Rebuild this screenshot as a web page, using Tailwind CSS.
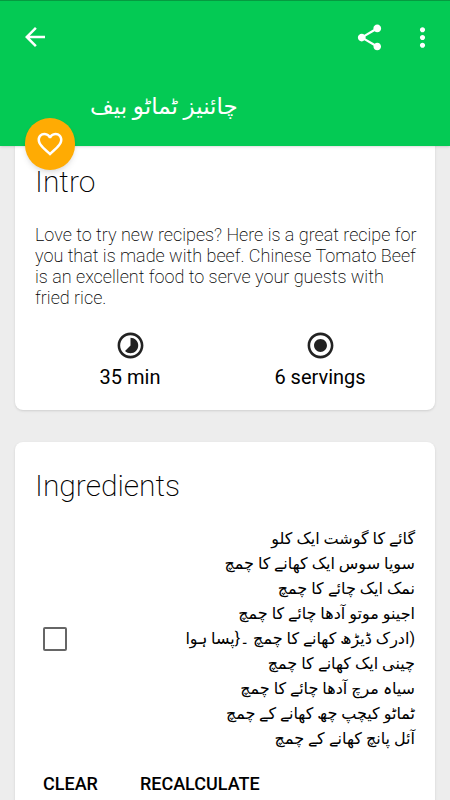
<!DOCTYPE html>
<html lang="en">
<head>
    <meta charset="UTF-8">
    <meta name="viewport" content="width=device-width, initial-scale=1.0">
    <title>Recipe</title>

    <!-- tailwind cdn -->
    <script src="https://cdn.jsdelivr.net/npm/@tailwindcss/browser@4"></script>
</head>
<body class="bg-[#ededed] text-black font-['Roboto','DejaVu_Sans',sans-serif] overflow-x-hidden">

    <!-- app bar -->
    <header class="relative z-10 bg-[#04ca54] border-t border-[#069a40] text-white shadow-sm">
        <div class="h-18 flex items-center justify-between pl-5 pr-3">
            <button type="button" aria-label="Back" class="cursor-pointer">
                <svg class="size-[30px]" viewBox="0 0 24 24" fill="currentColor"><path d="M20 11H7.83l5.59-5.59L12 4l-8 8 8 8 1.41-1.41L7.83 13H20v-2z"/></svg>
            </button>
            <div class="flex items-center gap-[22px]">
                <button type="button" aria-label="Share" class="cursor-pointer">
                    <svg class="size-[31px]" viewBox="0 0 24 24" fill="currentColor"><path d="M18 16.08c-.76 0-1.44.3-1.96.77L8.91 12.7c.05-.23.09-.46.09-.7s-.04-.47-.09-.7l7.05-4.11c.54.5 1.25.81 2.04.81 1.66 0 3-1.34 3-3s-1.34-3-3-3-3 1.34-3 3c0 .24.04.47.09.7L8.04 9.81C7.5 9.31 6.79 9 6 9c-1.66 0-3 1.34-3 3s1.34 3 3 3c.79 0 1.5-.31 2.04-.81l7.12 4.16c-.05.21-.08.43-.08.65 0 1.61 1.31 2.92 2.92 2.92s2.92-1.31 2.92-2.92-1.31-2.92-2.92-2.92z"/></svg>
                </button>
                <button type="button" aria-label="More options" class="cursor-pointer">
                    <svg class="size-[31px]" viewBox="0 0 24 24" fill="currentColor"><path d="M12 8c1.1 0 2-.9 2-2s-.9-2-2-2-2 .9-2 2 .9 2 2 2zm0 2c-1.1 0-2 .9-2 2s.9 2 2 2 2-.9 2-2-.9-2-2-2zm0 6c-1.1 0-2 .9-2 2s.9 2 2 2 2-.9 2-2-.9-2-2-2z"/></svg>
                </button>
            </div>
        </div>
        <h1 class="pl-[90px] pt-[18px] pb-[23px] text-[23px] leading-8 text-left"><span lang="ur" dir="rtl">چائنیز ٹماٹو بیف</span></h1>
        <button type="button" aria-label="Add to favorites" class="absolute left-[25px] -bottom-6 w-[50px] h-[52px] rounded-full bg-[#ffab03] shadow-md flex items-center justify-center cursor-pointer">
            <svg class="size-[30px]" viewBox="0 0 24 24" fill="currentColor"><path d="M16.5 3c-1.74 0-3.41.81-4.5 2.09C10.91 3.81 9.24 3 7.5 3 4.42 3 2 5.42 2 8.5c0 3.78 3.4 6.86 8.55 11.54L12 21.35l1.45-1.32C18.6 15.36 22 12.28 22 8.5 22 5.42 19.58 3 16.5 3zm-4.4 15.55l-.1.1-.1-.1C7.14 14.24 4 11.39 4 8.5 4 6.5 5.5 5 7.5 5c1.54 0 3.04.99 3.57 2.36h1.87C13.46 5.99 14.96 5 16.5 5c2 0 3.5 1.5 3.5 3.5 0 2.89-3.14 5.74-7.9 10.05z"/></svg>
        </button>
    </header>

    <main class="px-[15px] pb-8 -mt-2 flex flex-col gap-8">
        <section class="bg-white rounded-lg shadow pl-5 pr-4 pt-6 pb-[19px]">
            <h2 class="text-3xl leading-10 font-extralight">Intro</h2>
            <p class="mt-[22px] text-lg leading-[21px] font-extralight">Love to try new recipes? Here is a great recipe for you that is made with beef. Chinese Tomato Beef is an excellent food to serve your guests with fried rice.</p>
            <div class="mt-[22px] pr-1 grid grid-cols-2 text-center text-xl leading-7">
                <div class="flex flex-col items-center gap-[2px]">
                    <svg class="size-[31px]" viewBox="0 0 24 24" fill="#222"><path d="M16.24 7.76C15.07 6.59 13.54 6 12 6v6l-4.24 4.24c2.34 2.34 6.14 2.34 8.49 0 2.34-2.34 2.34-6.14-.01-8.48zM12 2C6.48 2 2 6.48 2 12s4.48 10 10 10 10-4.48 10-10S17.52 2 12 2zm0 18c-4.42 0-8-3.58-8-8s3.58-8 8-8 8 3.58 8 8-3.58 8-8 8z"/></svg>
                    <span>35 min</span>
                </div>
                <div class="flex flex-col items-center gap-[2px]">
                    <svg class="size-[31px]" viewBox="0 0 24 24" fill="#222"><path d="M12 7c-2.76 0-5 2.24-5 5s2.24 5 5 5 5-2.24 5-5-2.24-5-5-5zm0-5C6.48 2 2 6.48 2 12s4.48 10 10 10 10-4.48 10-10S17.52 2 12 2zm0 18c-4.42 0-8-3.58-8-8s3.58-8 8-8 8 3.58 8 8-3.58 8-8 8z"/></svg>
                    <span>6 servings</span>
                </div>
            </div>
        </section>

        <section class="bg-white rounded-lg shadow px-5 pt-6 pb-[19px]">
            <h2 class="text-3xl leading-10 font-extralight">Ingredients</h2>
            <div class="mt-5 flex items-center justify-between">
                <input type="checkbox" id="ingredients" class="appearance-none ml-2 size-6 shrink-0 rounded-xs border-2 border-[#666] checked:bg-[#04ca54] cursor-pointer">
                <label for="ingredients" lang="ur" dir="rtl" class="text-base leading-[25px] cursor-pointer">
                    گائے کا گوشت ایک کلو<br>
                    سویا سوس ایک کھانے کا چمچ<br>
                    نمک ایک چائے کا چمچ<br>
                    اجینو موتو آدھا چائے کا چمچ<br>
                    (ادرک ڈیڑھ کھانے کا چمچ ۔{پسا ہوا<br>
                    چینی ایک کھانے کا چمچ<br>
                    سیاہ مرچ آدھا چائے کا چمچ<br>
                    ٹماٹو کیچپ چھ کھانے کے چمچ<br>
                    آئل پانچ کھانے کے چمچ
                </label>
            </div>
            <div class="mt-[19px] px-2 flex gap-[42px] text-lg leading-7 font-medium">
                <button type="button" class="cursor-pointer">CLEAR</button>
                <button type="button" class="cursor-pointer">RECALCULATE</button>
            </div>
        </section>
    </main>

</body>
</html>
